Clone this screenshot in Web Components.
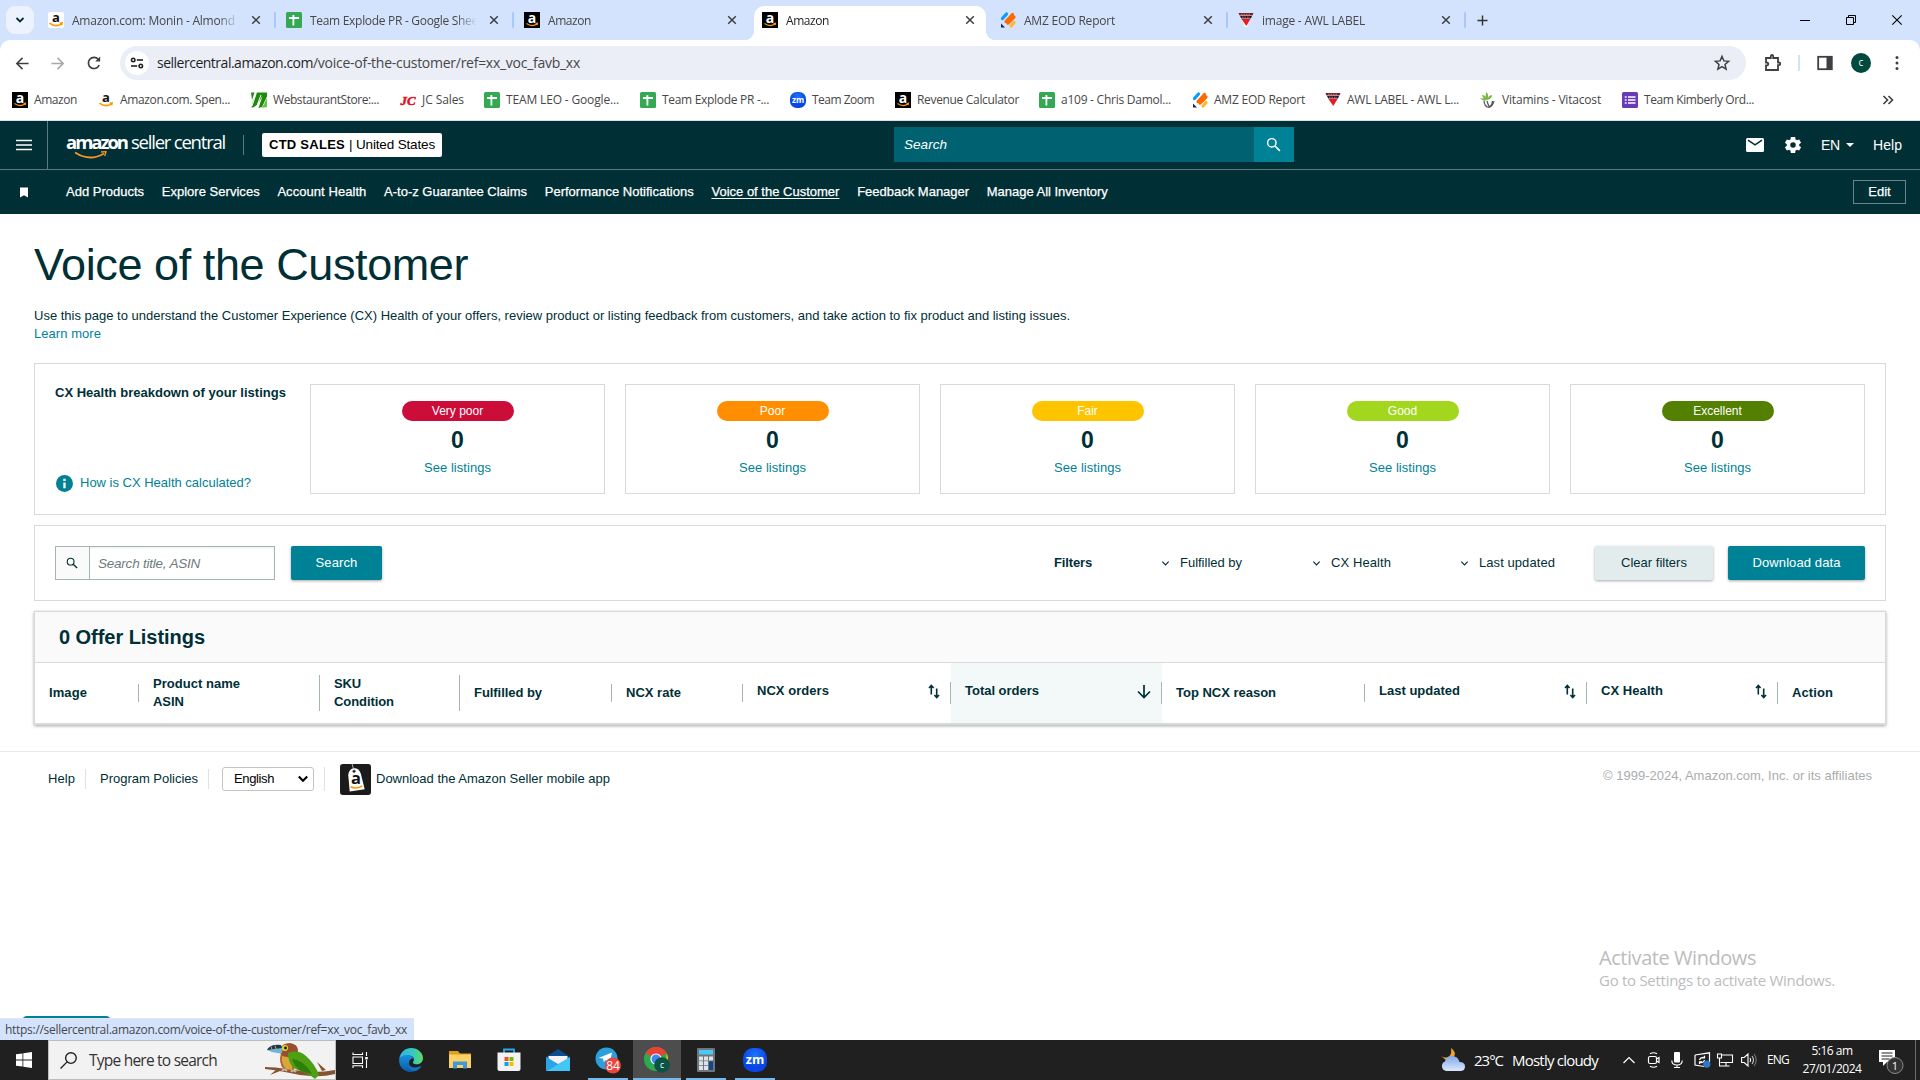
<!DOCTYPE html>
<html lang="en">

<head>
  <meta charset="UTF-8">
  <meta name="viewport" content="width=device-width, initial-scale=1.0">
  <title>Amazon</title>
  <style>
    html, body { height: 100%; }
    body {
      margin: 0;
      width: 1920px;
      height: 1080px;
      overflow: hidden;
      background: #fff;
      color: #002f36;
      font: 13px/18px "Liberation Sans", Arial, sans-serif;
      --teal: #008296;
      --ink: #002f36;
      --line: #d5dbdb;
      --ui: "Open Sans", "Noto Sans", sans-serif;
    }
  </style>
</head>

<body>
  <app-screen></app-screen>

  <script>
    // small helper: element with an open shadow root and a template
    function define(name, render, after) {
      customElements.define(name, class extends HTMLElement {
        connectedCallback() {
          if (this.shadowRoot) return;
          const tpl = document.createElement('template');
          tpl.innerHTML = render(this);
          this.attachShadow({ mode: 'open' }).appendChild(tpl.content.cloneNode(true));
          if (after) after(this);
        }
      });
    }

    const ICONS = {
      amzdark: `<svg viewBox="0 0 16 16"><rect width="16" height="16" fill="#000"/><text x="8" y="10.6" font-size="14" font-weight="700" text-anchor="middle" fill="#fff" font-family="Open Sans,sans-serif">a</text><path d="M2.5 11.6q5.3 3.8 10.5.5M11.5 11.5l2-.3-.4 1.8" fill="none" stroke="#f90" stroke-width="1.2"/></svg>`,
      amz: `<svg viewBox="0 0 16 16"><rect width="16" height="16" rx="2" fill="#fff"/><text x="8" y="10" font-size="13" font-weight="700" text-anchor="middle" fill="#111" font-family="Open Sans,sans-serif">a</text><path d="M1.5 11.2q6 4.5 12 .6M11.6 11.2l2.5-.2-.5 2.2" fill="none" stroke="#f90" stroke-width="1.6"/></svg>`,
      sheet: `<svg viewBox="0 0 16 16"><rect width="16" height="16" rx="1.5" fill="#34a853"/><path d="M3 6h10M7.4 3v10.5" stroke="#fff" stroke-width="1.8"/></svg>`,
      webst: `<svg viewBox="0 0 16 16"><path d="M0 .5h3.5L1 8zM6 .5h10v4L11 15l-3.500 1 4-12L6 13 2 15.500H.5L2 9z" fill="#1e8a0e"/><path d="M1 14L5 2M5.500 15L10 3" stroke="#fff" stroke-width="1"/><path d="M11 16l5-1V6z" fill="#6fbf4a"/></svg>`,
      jc: `<svg viewBox="0 0 16 16"><text x="8" y="12.500" font-size="12.500" font-style="italic" font-weight="700" text-anchor="middle" textLength="15" lengthAdjust="spacingAndGlyphs" fill="#e2121b" stroke="#e2121b" stroke-width=".5" font-family="Liberation Serif,serif">JC</text></svg>`,
      zm: `<svg viewBox="0 0 24 24"><defs><radialGradient id="z" cy=".3"><stop offset="0" stop-color="#1b76ff"/><stop offset="1" stop-color="#0a45e6"/></radialGradient></defs><rect width="24" height="24" rx="10" fill="url(#z)"/><text x="12" y="16" font-size="12.500" font-weight="700" text-anchor="middle" fill="#fff" font-family="Open Sans,sans-serif">zm</text></svg>`,
      amzeod: `<svg viewBox="0 0 16 16" stroke-linecap="round" stroke-width="3.200"><path d="M2.500 6.500L6.500 2" stroke="#0a9bff"/><path d="M6 9.500L12.500 2.500M8 11L14 5" stroke="#ff6a00"/><path d="M11 14L14 10.500" stroke="#ffb72b"/><path d="M1 11.500l4 4H1z" fill="#1d1d5e"/></svg>`,
      awl: `<svg viewBox="0 0 16 16"><path d="M0 1h16L9 15H7z" fill="#fff"/><path d="M.5 1h15l-1 2.500h-13z" fill="#6d1d3a"/><path d="M2 4h12l-1 2.500H3.200z" fill="#1e0f3c"/><path d="M3.500 7h9L8.300 14z" fill="#f01818"/><path d="M3 2.300h9M4 5.200h8" stroke="#e8a33a" stroke-width=".8" stroke-dasharray="1.500 1"/></svg>`,
      vita: `<svg viewBox="0 0 16 16" fill="none"><path d="M7 8Q3 7 2 3 6 3 7 8zM7 8Q4.500 4 6.500 0q3 3 .5 8zM7 8q1-4.500 5-5Q12 7 7 8zM0 6.500q5-1 6.500 2Q3 9 0 6.500z" fill="#7ab648"/><path d="M4 8.500q0 6 5 7Q13 14 14 9M7 9q1 4 2.500 6 3-2 3-6" stroke="#555" stroke-width="1.200"/></svg>`,
      form: `<svg viewBox="0 0 16 16"><rect width="16" height="16" rx="1.500" fill="#673ab7"/><path d="M6 5h7.500M6 8h7.500M6 11h7.500" stroke="#fff" stroke-width="1.700"/><path d="M2.800 5h1.800M2.800 8h1.800M2.800 11h1.800" stroke="#fff" stroke-width="1.700"/></svg>`,
      close: `<svg viewBox="0 0 10 10"><path d="M1.200 1.200l7.600 7.600M8.800 1.200L1.200 8.800" stroke="#3c4043" stroke-width="1.500"/></svg>`,
      plus: `<svg viewBox="0 0 12 12"><path d="M6 .5v11M.5 6h11" stroke="#333" stroke-width="1.600"/></svg>`,
      chevron: `<svg viewBox="0 0 10 10" fill="none"><path d="M1.500 3L5 6.500 8.500 3" stroke="currentColor" stroke-width="1.800"/></svg>`,
      thinchev: `<svg viewBox="0 0 10 10" fill="none"><path d="M1.500 3L5 6.500 8.500 3" stroke="currentColor" stroke-width="1.300"/></svg>`,
      back: `<svg viewBox="0 0 16 16" fill="none" stroke="currentColor" stroke-width="1.700"><path d="M14.500 8H2.500M8 2L2 8l6 6"/></svg>`,
      forward: `<svg viewBox="0 0 16 16" fill="none" stroke="currentColor" stroke-width="1.700"><path d="M1.500 8h12M8 2l6 6-6 6"/></svg>`,
      reload: `<svg viewBox="0 0 16 16" fill="none"><path d="M13.200 10A5.600 5.600 0 1 1 12.300 4.300L13.500 5.500" stroke="#3c4043" stroke-width="1.700"/><path d="M14.200 1.500V6.500H9.200z" fill="#3c4043"/></svg>`,
      tune: `<svg viewBox="0 0 14 14" fill="none" stroke="#202124" stroke-width="1.600"><circle cx="3.200" cy="4" r="1.700"/><path d="M6.800 4H13"/><circle cx="10.800" cy="10" r="1.700"/><path d="M1 10h6.200"/></svg>`,
      star: `<svg viewBox="0 0 16 16" fill="none"><path d="M8 1.500l1.900 4.400 4.700.4-3.600 3.100 1.100 4.700L8 11.600l-4.100 2.500L5 9.400 1.400 6.300l4.700-.4z" stroke="#3c4043" stroke-width="1.500"/></svg>`,
      puzzle: `<svg viewBox="0 0 18 18" fill="none"><path d="M2 4h4.800V2.200a1.200 1.200 0 0 1 2.400 0V4H14v4.500h1a1.300 1.300 0 0 1 0 2.600h-1V16H2v-4.500h.8a1.500 1.500 0 0 0 0-3H2z" stroke="#3c4043" stroke-width="1.800"/></svg>`,
      panel: `<svg viewBox="0 0 16 16"><rect x="1.200" y="1.800" width="13.600" height="12.400" fill="none" stroke="#3c4043" stroke-width="1.800"/><path d="M9.500 2h5v12h-5z" fill="#3c4043"/></svg>`,
      dots: `<svg viewBox="0 0 16 16" fill="#3c4043"><circle cx="8" cy="2.500" r="1.500"/><circle cx="8" cy="8" r="1.500"/><circle cx="8" cy="13.500" r="1.500"/></svg>`,
      more: `<svg viewBox="0 0 12 12" fill="none" stroke="#3c4043" stroke-width="1.600"><path d="M1.500 2l4 4-4 4M6.500 2l4 4-4 4"/></svg>`,
      min: `<svg viewBox="0 0 10 10"><path d="M0 5.500h10" stroke="#000" stroke-width="1"/></svg>`,
      restore: `<svg viewBox="0 0 10 10" fill="none" stroke="#000"><path d="M.5 2.500h7v7h-7zM2.500 2.500v-2h7v7h-2"/></svg>`,
      winclose: `<svg viewBox="0 0 10 10"><path d="M.3.3l9.400 9.400M9.700.3L.3 9.700" stroke="#000" stroke-width="1.100"/></svg>`,
      burger: `<svg viewBox="0 0 16 12"><path d="M0 1.500h16M0 6h16M0 10.500h16" stroke="#fff" stroke-width="1.700"/></svg>`,
      mark: `<svg viewBox="0 0 9 11"><path d="M0 0h9v11L4.500 8.500 0 11z" fill="#fff"/></svg>`,
      search: `<svg viewBox="0 0 16 16" fill="none" stroke="currentColor"><circle cx="6.200" cy="6.200" r="4.500" stroke-width="1.500"/><path d="M9.600 9.600l5.200 5.200" stroke-width="1.800"/></svg>`,
      mail: `<svg viewBox="0 0 18 14"><rect width="18" height="14" rx="1.500" fill="#fff"/><path d="M2 2.200l7 4.600 7-4.600" fill="none" stroke="#002f36" stroke-width="1.600"/></svg>`,
      gear: `<svg viewBox="0 0 24 24"><path fill="#fff" fill-rule="evenodd" d="M19.400 13a7.800 7.800 0 0 0 0-2l2.300-1.700-2.300-4-2.700 1.100a7.500 7.500 0 0 0-1.700-1L14.600 2.500H9.400L9 5.400a7.500 7.500 0 0 0-1.700 1L4.600 5.300l-2.300 4L4.600 11a7.800 7.800 0 0 0 0 2l-2.300 1.700 2.300 4 2.700-1.100c.5.4 1.100.7 1.700 1l.4 2.900h5.200l.4-2.900c.6-.3 1.200-.6 1.700-1l2.700 1.100 2.300-4zM12 15.300a3.300 3.300 0 1 1 0-6.600 3.300 3.300 0 0 1 0 6.600z"/></svg>`,
      caret: `<svg viewBox="0 0 8 4"><path d="M0 0h8L4 4z" fill="#fff"/></svg>`,
      info: `<svg viewBox="0 0 16 16"><circle cx="8" cy="8" r="8" fill="#008296"/><path d="M8 3.500v2.200M8 7v5.500" stroke="#fff" stroke-width="2.200"/></svg>`,
      sort: `<svg viewBox="0 0 12 16" fill="none" stroke="#002f36" stroke-width="1.600"><path d="M3.300 11V2.500M1 4.500L3.300 2l2.300 2.500M8.700 5v8.500M6.400 11.500L8.700 14l2.300-2.500"/></svg>`,
      down: `<svg viewBox="0 0 14 14" fill="none" stroke="#002f36" stroke-width="1.700"><path d="M7 .5v12M1 7l6 6 6-6"/></svg>`,
      app: `<svg viewBox="0 0 32 32"><rect width="32" height="32" rx="3" fill="#1b1b1b"/><path d="M8.500 11q1-6 6-6.500 5-.2 7 5.500l4 16-15.500 2.500z" fill="#fff"/><circle cx="14.500" cy="7.500" r="1.500" fill="#1b1b1b"/><path d="M14.500 7L12.500 0" stroke="#ddd" stroke-width=".8"/><text x="16.500" y="21" font-size="17" font-weight="700" text-anchor="middle" fill="#111" font-family="Open Sans,sans-serif">a</text><path d="M11 23.500q6 3 12-1" fill="none" stroke="#f90" stroke-width="1.500"/></svg>`,
      start: `<svg viewBox="0 0 16 16" fill="#fff"><path d="M0 2.300L6.500 1.400v6.200H0zM7.300 1.300L16 0v7.600H7.300zM0 8.400h6.500v6.200L0 13.700zM7.300 8.400H16V16l-8.700-1.300z"/></svg>`,
      glass: `<svg viewBox="0 0 16 16" fill="none" stroke="#222" stroke-width="1.300"><circle cx="10.300" cy="5.700" r="5"/><path d="M6.700 9.300L.5 15.500"/></svg>`,
      bird: `<svg viewBox="0 0 72 38"><path d="M2 26q10 0 22 2t26 3q12 0 22-2v4q-12 3-24 2Q34 34 22 31q-10-2-20-3z" fill="#85532f"/><path d="M59 30L54 21l9 8zM14 28L7 34l10-4z" fill="#85532f"/><path d="M18 12q-3 10 3 17l10 1 2-14z" fill="#b5622f"/><path d="M19 15q-1 8 4 13l6 1 1-12z" fill="#d9a63a"/><path d="M17 8q2-6 10-6 8 1 8 8 0 4-4 7l-11-2q-4-3-3-7z" fill="#96502d"/><path d="M25 12q10-4 18 3 9 8 13 19l-4 4q-7-6-15-8-12-4-12-18z" fill="#4da012"/><path d="M29 18q12 1 20 15-16-2-20-15z" fill="#2f7d0b"/><path d="M4 9q7 4 15 3l1-5-8-3q-6 1-8 5z" fill="#6fb4d4"/><path d="M4 9q3-6 14-5l1 3z" fill="#26343b"/><path d="M8 5.500l1 3M12 4.500l1 3.500" stroke="#cde" stroke-width=".7"/><circle cx="22" cy="7" r="3" fill="#e3d820"/><circle cx="22.500" cy="7" r="1.400" fill="#111"/><path d="M19 30q2-3 5 0M28 31q2-3 5 0" stroke="#c9b6a5" stroke-width="2" fill="none"/></svg>`,
      taskview: `<svg viewBox="0 0 16 16" fill="none" stroke="#fff" stroke-width="1.100"><path d="M1 5h9.500v6.500H1zM1 .5v2h9.500v-2M1 16v-2.200h9.500V16M14.500 0v4M14.500 8v8"/><path d="M13.200 5h2.600v2.400h-2.600z" fill="#fff" stroke="none"/></svg>`,
      edge: `<svg viewBox="0 0 24 24"><defs><linearGradient id="e1" x1="0" x2="1"><stop offset="0" stop-color="#2fb3e8"/><stop offset=".6" stop-color="#37c9c0"/><stop offset="1" stop-color="#62dd5c"/></linearGradient><linearGradient id="e2" x1="0" y1="0" x2="0" y2="1"><stop offset="0" stop-color="#1a93dd"/><stop offset="1" stop-color="#0c59a4"/></linearGradient></defs><path d="M.3 10.500C1.500 4 6.500 0 12 0c7 0 12 5 12 10 0 4-3 6.300-6.200 6.300-3 0-4.500-1.300-3.600-2.600 1.700-2.700.2-6.200-4.700-6.200C5 7.500 1.500 9 .3 10.500z" fill="url(#e1)"/><path d="M.2 10.600C1.600 8 5 6.600 8.800 7 12 7.400 14 9 14.300 10.500 9 9.500 7.500 20 17.500 22.600 10 26.500-1.200 22 .2 10.600z" fill="url(#e2)"/><path d="M9.500 12.500c-1.500 5 4 9.500 13 5.200-1 2.300-3 4.200-5.500 5.200-6 .5-10.500-6-7.500-10.400z" fill="#1370c2"/></svg>`,
      folder: `<svg viewBox="0 0 22 18"><path d="M0 0h9l2 2.500h11V16H0z" fill="#e09f1b"/><path d="M0 3.500h22V17H0z" fill="#fbd067"/><path d="M4 17.500V10.500h14v7h-4V14H8v3.500z" fill="#3f97dc"/></svg>`,
      store: `<svg viewBox="0 0 24 24"><path d="M7 5V1.500h10V5" fill="none" stroke="#28a8ea" stroke-width="1.800"/><path d="M.5 4.500h23V21a2 2 0 0 1-2 2h-19a2 2 0 0 1-2-2z" fill="#f2f2f2"/><path d="M7.500 9h4v4h-4z" fill="#f25022"/><path d="M12.500 9h4v4h-4z" fill="#7fba00"/><path d="M7.500 14h4v4h-4z" fill="#00a4ef"/><path d="M12.500 14h4v4h-4z" fill="#ffb900"/></svg>`,
      mailapp: `<svg viewBox="0 0 24 22"><path d="M0 8L12 0l12 8v2H0z" fill="#0a4d94"/><path d="M2.500 7h19v8h-19z" fill="#f3f3f3"/><path d="M0 8l12 7.500L0 22z" fill="#1a8fe0"/><path d="M24 8L0 22h24z" fill="#42c6f5"/><path d="M0 8l12 7L0 22z" fill="#2aa3ea"/></svg>`,
      telegram: `<svg viewBox="0 0 26 26"><circle cx="11.500" cy="11.500" r="11" fill="#2ba0dc"/><path d="M3.500 11L17 5.500 14.800 16l-4-3-2 2-.8-3.500z" fill="#fff"/><circle cx="18" cy="18.500" r="8" fill="#e8453c"/><text x="18" y="22.900" font-size="12" text-anchor="middle" fill="#fff" font-family="Open Sans,sans-serif">84</text></svg>`,
      chrome: `<svg viewBox="0 0 26 26"><circle cx="12" cy="12" r="12" fill="#2da94f"/><path d="M12 12L1.600 6A12 12 0 0 1 22.400 6z" fill="#ea4335"/><path d="M12 12h10.400L22.400 6A12 12 0 0 1 12 24z" fill="#fbbc05"/><path d="M12 6.500H22.600Q19 0 12 0z" fill="#ea4335"/><circle cx="12" cy="12" r="5.600" fill="#fff"/><circle cx="12" cy="12" r="4.500" fill="#4285f4"/><circle cx="18" cy="18" r="7.800" fill="#0b5345"/><text x="18" y="20.600" font-size="8.500" text-anchor="middle" fill="#fff" font-family="Open Sans,sans-serif">c</text></svg>`,
      calc: `<svg viewBox="0 0 18 24"><rect width="18" height="24" rx="1" fill="#6e757c"/><path d="M2 2h14v4.500H2z" fill="#4cc8f4"/><path d="M2 8.500h4v4H2zM7 8.500h4v4H7zM12 8.500h4v4h-4zM2 13.300h4v4H2zM7 13.300h4v4H7zM2 18h4v4H2zM7 18h4v4H7z" fill="#dfe3e6"/><path d="M12 13.300h4V22h-4z" fill="#114a8b"/></svg>`,
      weather: `<svg viewBox="0 0 24 24"><defs><linearGradient id="w" x1="0" y1="0" x2="0" y2="1"><stop offset="0" stop-color="#7fa9ea"/><stop offset="1" stop-color="#dbe8fc"/></linearGradient></defs><path d="M10 0q6 4 2.500 10L5 12 0 8q5 3 8.500 0Q11 5 10 0z" fill="#f2a52b"/><path d="M5 23a5 5 0 0 1-1-9.500Q5 8 11 8t7.500 6Q24 14 24 18.500T19 23z" fill="url(#w)"/></svg>`,
      up: `<svg viewBox="0 0 12 8" fill="none"><path d="M.5 7L6 1.500 11.500 7" stroke="#fff" stroke-width="1.200"/></svg>`,
      cam: `<svg viewBox="0 0 14 16" fill="none" stroke="#fff" stroke-width="1.200"><rect x="1.500" y="4.500" width="8" height="7" rx="1.500"/><path d="M9.500 7l2.500-1.500v5L9.500 9M3 1.800Q6.500-.3 10 1.800M3 14.200q3.500 2.100 7 0"/></svg>`,
      mic: `<svg viewBox="0 0 12 16"><rect x="3" y="0" width="6" height="10.500" rx="1" fill="#fff"/><path d="M.8 8.500q0 4.500 5.200 4.500t5.200-4.500M6 13v2.500M3 15.500h6" fill="none" stroke="#fff" stroke-width="1.100"/></svg>`,
      sync: `<svg viewBox="0 0 17 16" fill="none" stroke="#fff" stroke-width="1.200"><path d="M1 3L15.500.8V10M1 3v10l9 1.500"/><path d="M5.500 8q1-3 5-2.500M10.500 3.800V6H8M10.500 8q-.5 3-4.500 2.500M5.500 12V9.800H8"/><circle cx="12.800" cy="12.200" r="3.600" fill="#2f78c8" stroke="none"/></svg>`,
      net: `<svg viewBox="0 0 16 14" fill="none" stroke="#fff" stroke-width="1.100"><path d="M5 2h10.500v7.500H3.500M9 9.500v3.500M5.500 13h7M.5 1h4v4h-4zM2.500 5v8h3"/></svg>`,
      sound: `<svg viewBox="0 0 17 14" fill="none" stroke="#fff" stroke-width="1.100"><path d="M.6 4.500h2.600L7 1v12L3.200 9.500H.6zM9 5q1.300 2 0 4"/><path d="M11 3q3 4 0 8" stroke="#ccc"/><path d="M13 1q4.500 6 0 12" stroke="#777"/></svg>`,
      notif: `<svg viewBox="0 0 24 24"><path d="M0 0h16v12H8l-4 4v-4H0z" fill="#fff"/><path d="M2.500 3h11M2.500 6h11M2.500 9h8" stroke="#202020"/><circle cx="16" cy="15.500" r="8" fill="#333" stroke="#8a8a8a"/><text x="16" y="19.500" font-size="11" text-anchor="middle" fill="#fff" font-family="Open Sans,sans-serif">1</text></svg>`
    };

    define('ui-icon', el => `
      <style>
        :host { display: inline-flex; flex: none; }
        svg { display: block; width: ${el.getAttribute('w') || 16}px; height: ${el.getAttribute('h') || el.getAttribute('w') || 16}px; overflow: visible; }
      </style>${ICONS[el.getAttribute('name')]}`);

    // one line of text spaced out to an exact width
    define('fit-text', el => `
      <style>
        :host { display: inline-block; flex: none; width: ${el.getAttribute('w')}px; white-space: nowrap; }
        span { display: inline-block; text-decoration: inherit; text-underline-offset: 2px; }
      </style><span><slot></slot></span>`, el => fits.push(el));
    const fits = [];
    function fitAll() {
      const jobs = fits.map(el => {
        const span = el.shadowRoot.querySelector('span');
        return [span, (el.getAttribute('w') - span.getBoundingClientRect().width) / el.textContent.length];
      });
      jobs.forEach(([span, ls]) => span.style.letterSpacing = ls + 'px');
    }

    define('browser-tab', el => `
      <style>
        :host { display: flex; width: 238px; height: 34px; box-sizing: border-box; position: relative; align-items: center; padding: 0 0 6px 10px; font: 12px/16px var(--ui); color: #474747; }
        :host([active]) { color: #1f1f1f; background: #fff; border-radius: 10px 10px 0 0; width: 232px; padding-left: 8px; margin: 0 4px 0 2px; }
        :host([active])::before, :host([active])::after { content: ""; position: absolute; bottom: 0; width: 10px; height: 10px; }
        :host([active])::before { left: -10px; background: radial-gradient(circle at 0 0, transparent 10px, #fff 10.500px); }
        :host([active])::after { right: -10px; background: radial-gradient(circle at 100% 0, transparent 10px, #fff 10.500px); }
        .label { flex: none; width: 170px; margin: 1px 9px 0 8px; overflow: hidden; white-space: nowrap; -webkit-mask: linear-gradient(90deg, #000 146px, transparent 167px); }
        i { width: 2px; height: 16px; background: #a8c7fa; margin-left: 13px; border-radius: 1px; }
        :host([nosep]) i { visibility: hidden; }
        :host([active]) i { display: none; }
      </style>
      <ui-icon name="${el.getAttribute('icon')}"></ui-icon>
      <div class="label"><fit-text w="${el.getAttribute('w')}"><slot></slot>${el.getAttribute('label')}</fit-text></div>
      <ui-icon name="close" w="10"></ui-icon><i></i>`);

    define('bookmark-item', el => `
      <style>
        :host { display: flex; align-items: center; gap: 6px; font: 12px/16px var(--ui); color: #474747; }
      </style>
      <ui-icon name="${el.getAttribute('icon')}"></ui-icon><fit-text w="${el.getAttribute('w')}">${el.getAttribute('label')}</fit-text>`);

    const TABS = [
      ['amz', 172, 'Amazon.com: Monin - Almond S', ''],
      ['sheet', 168, 'Team Explode PR - Google Shee', ''],
      ['amzdark', 43, 'Amazon', 'nosep'],
      ['amzdark', 43, 'Amazon', 'active'],
      ['amzeod', 91, 'AMZ EOD Report', ''],
      ['awl', 103, 'image - AWL LABEL', '']
    ];
    // icon, slot width, text width, label
    const BOOKMARKS = [
      ['amzdark', 86, 43, 'Amazon'],
      ['amz', 153, 110, 'Amazon.com. Spen...'],
      ['webst', 149, 106, 'WebstaurantStore:...'],
      ['jc', 84, 42, 'JC Sales'],
      ['sheet', 156, 113, 'TEAM LEO - Google...'],
      ['sheet', 150, 107, 'Team Explode PR -...'],
      ['zm', 105, 62, 'Team Zoom'],
      ['amzdark', 144, 102, 'Revenue Calculator'],
      ['sheet', 153, 110, 'a109 - Chris Damol...'],
      ['amzeod', 133, 91, 'AMZ EOD Report'],
      ['awl', 155, 112, 'AWL LABEL - AWL L...'],
      ['vita', 142, 99, 'Vitamins - Vitacost'],
      ['form', 140, 110, 'Team Kimberly Ord...']
    ];

    define('browser-chrome', () => `
      <style>
        :host { display: block; height: 121px; background: #d3e3fd; flex: none; }
        .strip { display: flex; height: 34px; padding: 6px 0 0 6px; align-items: center; }
        .find { width: 28px; height: 28px; border-radius: 9px; background: #ecf3fe; display: flex; align-items: center; justify-content: center; margin: -6px 4px 0 0; }
        .plus { margin: -6px 0 0 11px; }
        .wins { margin-left: auto; display: flex; gap: 36px; padding-right: 18px; margin-top: -6px; }
        .bars { background: #fff; border-radius: 10px 10px 0 0; height: 80px; border-bottom: 1px solid #dcdfe3; }
        .tools { display: flex; align-items: center; height: 46px; padding-left: 15px; color: #3c4043; }
        .box { display: flex; align-items: center; width: 1626px; height: 34px; border-radius: 17px; background: #ebeef7; box-sizing: border-box; padding: 0 16px 0 5px; margin-left: 18px; font: 14px/20px var(--ui); color: #474747; }
        .tune { width: 24px; height: 24px; border-radius: 12px; background: #fff; display: flex; align-items: center; justify-content: center; margin-right: 8px; }
        b { font-weight: 400; color: #1f1f1f; }
        .sep { width: 2px; height: 16px; background: #d3e3fd; margin: 0 17px 0 16px; }
        .me { width: 20px; height: 20px; border-radius: 10px; background: #00493e; color: #fff; font: 10px/19px var(--ui); text-align: center; margin: 0 18px 0 18px; }
        .marks { display: flex; align-items: center; height: 28px; padding-left: 12px; }
        .marks ui-icon:last-child { margin-left: auto; padding-right: 26px; }
      </style>
      <div class="strip">
        <div class="find"><ui-icon name="chevron" w="10"></ui-icon></div>
        ${TABS.map(t => `<browser-tab icon="${t[0]}" w="${t[1]}" label="${t[2]}" ${t[3]}></browser-tab>`).join('')}
        <ui-icon class="plus" name="plus" w="11"></ui-icon>
        <div class="wins"><ui-icon name="min" w="10"></ui-icon><ui-icon name="restore" w="10"></ui-icon><ui-icon name="winclose" w="10"></ui-icon></div>
      </div>
      <div class="bars">
        <div class="tools">
          <ui-icon name="back" w="15"></ui-icon>
          <ui-icon name="forward" w="15" style="margin-left:20px;color:#a5a8ab"></ui-icon>
          <ui-icon name="reload" w="16" style="margin-left:21px"></ui-icon>
          <div class="box">
            <div class="tune"><ui-icon name="tune" w="14"></ui-icon></div>
            <b><fit-text w="156">sellercentral.amazon.com</fit-text></b><fit-text w="267">/voice-of-the-customer/ref=xx_voc_favb_xx</fit-text>
            <ui-icon name="star" w="16" style="margin-left:auto"></ui-icon>
          </div>
          <ui-icon name="puzzle" w="18" style="margin-left:18px"></ui-icon>
          <div class="sep"></div>
          <ui-icon name="panel" w="16"></ui-icon>
          <div class="me">c</div>
          <ui-icon name="dots" w="16"></ui-icon>
        </div>
        <div class="marks">
          ${BOOKMARKS.map(b => `<bookmark-item style="width:${b[1]}px" icon="${b[0]}" w="${b[2]}" label="${b[3]}"></bookmark-item>`).join('')}
          <ui-icon name="more" w="12"></ui-icon>
        </div>
      </div>`);

    define('seller-header', () => `
      <style>
        :host { display: block; flex: none; height: 93px; background: #002f36; color: #fff; }
        .top { display: flex; height: 48px; align-items: center; border-bottom: 1px solid #5f7a7e; }
        .menu { width: 47px; height: 48px; border-right: 1px solid #5f7a7e; display: flex; align-items: center; justify-content: center; }
        .logo { position: relative; width: 160px; margin-left: 18px; display: flex; gap: 4px; font: 18.500px/20px var(--ui); margin-top: -6px; }
        .logo b { font-weight: 700; }
        .logo svg { position: absolute; left: 8px; top: 19px; }
        .bar { width: 1px; height: 20px; background: #5f7a7e; margin: 0 18px 0 17px; }
        .shop { width: 180px; height: 24px; box-sizing: border-box; background: #fff; border-radius: 2px; color: #000; font: 13.500px/24px "Liberation Sans", sans-serif; display: flex; padding-left: 7px; }
        .shop b { font-size: 13px; }
        .find { display: flex; width: 400px; height: 35px; margin-left: 452px; margin-top: -1px; background: #006170; }
        .find em { flex: 1; padding-left: 10px; font-size: 13.500px; line-height: 35px; }
        .find div { width: 40px; background: #008296; display: flex; align-items: center; justify-content: center; box-sizing: border-box; padding: 0 1px 1px 0; }
        .right { display: flex; margin-left: auto; align-items: center; padding-right: 18px; font-size: 14px; }
        .nav { display: flex; height: 44px; align-items: center; padding: 0 14px 0 20px; }
        .nav a { margin-right: 17.700px; line-height: 15px; padding-bottom: 2px; }
        .nav a fit-text { -webkit-text-stroke: .25px #fff; }
        .nav a.on fit-text { text-decoration: underline; }
        .edit { margin-left: auto; width: 53px; height: 24px; box-sizing: border-box; border: 1px solid #6d8588; line-height: 21px; text-align: center; -webkit-text-stroke: .25px #fff; }
      </style>
      <div class="top">
        <div class="menu"><ui-icon name="burger" w="16" h="12"></ui-icon></div>
        <div class="logo">
          <b><fit-text w="61">amazon</fit-text></b><fit-text w="94">seller central</fit-text>
          <svg width="34" height="9" fill="none" stroke="#f7942a"><path d="M1 1.500Q16 11 30 2.500" stroke-width="1.800"/><path d="M27 1l5-.3-1.300 4.300" stroke-width="1.300"/></svg>
        </div>
        <div class="bar"></div>
        <div class="shop"><b><fit-text w="76">CTD SALES</fit-text></b><span style="margin-left:4px"><fit-text w="86">| United States</fit-text></span></div>
        <div class="find"><em><fit-text w="43">Search</fit-text></em><div><ui-icon name="search" w="15"></ui-icon></div></div>
        <div class="right">
          <ui-icon name="mail" w="18" h="14"></ui-icon>
          <ui-icon name="gear" w="20" style="margin:0 18px 0 19px"></ui-icon>
          <fit-text w="19">EN</fit-text><ui-icon name="caret" w="8" h="4" style="margin:0 19px 0 6px"></ui-icon>
          <fit-text w="29">Help</fit-text>
        </div>
      </div>
      <div class="nav">
        <ui-icon name="mark" w="8" h="11" style="margin-right:38px"></ui-icon>
        ${[[78, 'Add Products'], [98, 'Explore Services'], [89, 'Account Health'], [143, 'A-to-z Guarantee Claims'], [149, 'Performance Notifications'], [128, 'Voice of the Customer'], [112, 'Feedback Manager'], [121, 'Manage All Inventory']]
          .map(([w, t], i) => `<a class="${i == 5 ? 'on' : ''}"><fit-text w="${w}">${t}</fit-text></a>`).join('')}
        <div class="edit">Edit</div>
      </div>`);

    define('health-card', el => `
      <style>
        :host { display: flex; flex-direction: column; align-items: center; box-sizing: border-box; height: 110px; border: 1px solid var(--line); padding-top: 16px; }
        .pill { width: 112px; height: 20px; border-radius: 10px; background: ${el.getAttribute('color')}; color: #fff; font-size: 12px; line-height: 20px; text-align: center; }
        b { font-size: 23px; line-height: 26px; margin-top: 6px; }
        a { color: var(--teal); margin-top: 6px; line-height: 18px; }
      </style>
      <div class="pill"><slot></slot></div><b>0</b><a><fit-text w="67">See listings</fit-text></a>`);

    define('health-panel', () => `
      <style>
        :host { display: grid; grid-template-columns: 235px repeat(5, 295px); column-gap: 20px; box-sizing: border-box; height: 152px; border: 1px solid var(--line); padding: 20px; }
        .side { display: flex; flex-direction: column; justify-content: space-between; height: 110px; }
        .how { display: flex; align-items: center; gap: 7px; color: var(--teal); padding: 0 0 2px 1px; }
      </style>
      <div class="side">
        <b><fit-text w="231">CX Health breakdown of your listings</fit-text></b>
        <div class="how"><ui-icon name="info" w="17"></ui-icon><fit-text w="171">How is CX Health calculated?</fit-text></div>
      </div>
      <health-card color="#cc0c39">Very poor</health-card>
      <health-card color="#ff8f00">Poor</health-card>
      <health-card color="#ffc400">Fair</health-card>
      <health-card color="#a2d71e">Good</health-card>
      <health-card color="#538000">Excellent</health-card>`);

    define('ui-button', () => `
      <style>
        :host { display: flex; align-items: center; justify-content: center; height: 34px; flex: none; border-radius: 2px; background: var(--teal); color: #fff; box-shadow: 0 1px 3px rgba(0, 0, 0, .35); padding-bottom: 1px; box-sizing: border-box; }
        :host([plain]) { background: #e3eced; color: var(--ink); }
      </style><slot></slot>`);

    define('filter-bar', () => `
      <style>
        :host { display: flex; align-items: center; box-sizing: border-box; height: 76px; border: 1px solid var(--line); padding: 0 20px; }
        .box { display: flex; width: 220px; height: 34px; box-sizing: border-box; border: 1px solid #a6b4b6; margin-right: 16px; box-shadow: inset 0 1px 2px rgba(0, 0, 0, .08); }
        .box div { width: 33px; border-right: 1px solid #a6b4b6; background: #fafafa; display: flex; align-items: center; justify-content: center; box-sizing: content-box; }
        .box div ui-icon { margin: 0 1px 1px 0; }
        .box em { padding-left: 8px; font-size: 13.500px; line-height: 33px; color: #6d7b7d; }
        .drop { display: flex; align-items: center; gap: 10px; }
      </style>
      <div class="box"><div><ui-icon name="search" w="12"></ui-icon></div><em><fit-text w="102">Search title, ASIN</fit-text></em></div>
      <ui-button style="width:91px"><fit-text w="42">Search</fit-text></ui-button>
      <b style="margin:0 69px 0 auto"><fit-text w="38">Filters</fit-text></b>
      <div class="drop" style="margin-right:70px"><ui-icon name="thinchev" w="9"></ui-icon><fit-text w="62">Fulfilled by</fit-text></div>
      <div class="drop" style="margin-right:69px"><ui-icon name="thinchev" w="9"></ui-icon><fit-text w="60">CX Health</fit-text></div>
      <div class="drop" style="margin-right:40px"><ui-icon name="thinchev" w="9"></ui-icon><fit-text w="76">Last updated</fit-text></div>
      <ui-button plain style="width:118px;margin-right:15px"><fit-text w="66">Clear filters</fit-text></ui-button>
      <ui-button style="width:137px"><fit-text w="88">Download data</fit-text></ui-button>`);

    define('table-head', el => `
      <style>
        :host { display: flex; align-items: center; justify-content: space-between; box-sizing: border-box; height: 60px; padding-left: 14px; font-weight: 700; }
        :host([on]) { background: #f3f8f9; }
        .text { padding-bottom: ${el.hasAttribute('icon') ? 5 : 0}px; }
        .end { display: flex; align-items: center; gap: 10px; }
        .end ui-icon { padding-bottom: 3px; }
        i { width: 1px; height: ${el.getAttribute('bar')}px; background: #a6b4b6; }
      </style>
      <div class="text"><slot></slot></div>
      <div class="end">${el.hasAttribute('icon') ? `<ui-icon name="${el.getAttribute('icon')}" w="${el.hasAttribute('on') ? 14 : 12}" h="${el.hasAttribute('on') ? 15 : 17}"></ui-icon>` : ''}${el.hasAttribute('bar') ? '<i></i>' : ''}</div>`);

    define('offer-table', () => `
      <style>
        :host { display: block; box-sizing: border-box; height: 114px; border: 1px solid var(--line); border-bottom-width: 2px; box-shadow: 0 1px 3px rgba(0, 0, 0, .35); }
        h2 { margin: 0; height: 50px; background: #fafafa; border-bottom: 1px solid var(--line); font-size: 20px; line-height: 50px; padding-left: 24px; }
        .row { display: grid; grid-template-columns: 104px 181px 140px 152px 131px 208px 211px 203px 222px 191px 1fr; }
      </style>
      <h2><fit-text w="146">0 Offer Listings</fit-text></h2>
      <div class="row">
        <table-head bar="18"><fit-text w="38">Image</fit-text></table-head>
        <table-head bar="36"><fit-text w="87">Product name</fit-text><br><fit-text w="31">ASIN</fit-text></table-head>
        <table-head bar="36"><fit-text w="27">SKU</fit-text><br><fit-text w="60">Condition</fit-text></table-head>
        <table-head bar="18"><fit-text w="68">Fulfilled by</fit-text></table-head>
        <table-head bar="18"><fit-text w="55">NCX rate</fit-text></table-head>
        <table-head bar="22" icon="sort"><fit-text w="72">NCX orders</fit-text></table-head>
        <table-head bar="22" icon="down" on><fit-text w="74">Total orders</fit-text></table-head>
        <table-head bar="18"><fit-text w="100">Top NCX reason</fit-text></table-head>
        <table-head bar="22" icon="sort"><fit-text w="81">Last updated</fit-text></table-head>
        <table-head bar="22" icon="sort"><fit-text w="62">CX Health</fit-text></table-head>
        <table-head><fit-text w="41">Action</fit-text></table-head>
      </div>`);

    define('page-footer', () => `
      <style>
        :host { display: flex; align-items: center; border-top: 1px solid #e7e9e9; margin-top: 26px; height: 54px; padding: 0 48px; }
        i { width: 1px; height: 20px; background: #e0e3e3; }
        .lang { width: 92px; height: 24px; box-sizing: border-box; border: 1px solid #bfc6c6; border-radius: 3px; display: flex; align-items: center; padding: 0 4px 0 11px; justify-content: space-between; color: #000; margin: 0 10px 0 13px; }
        .copy { margin-left: auto; color: #a9adad; padding-bottom: 7px; }
      </style>
      <fit-text w="27">Help</fit-text><i style="margin:0 14px 0 10px"></i>
      <fit-text w="98">Program Policies</fit-text><i style="margin-left:10px"></i>
      <div class="lang"><fit-text w="40">English</fit-text><ui-icon name="chevron" w="12"></ui-icon></div><i style="height:24px"></i>
      <ui-icon name="app" w="31" style="margin:1px 5px 0 15px"></ui-icon>
      <fit-text w="234">Download the Amazon Seller mobile app</fit-text>
      <div class="copy"><fit-text w="269">© 1999-2024, Amazon.com, Inc. or its affiliates</fit-text></div>`);

    define('voice-page', () => `
      <style>
        :host { display: block; flex: 1; position: relative; overflow: hidden; }
        .body { padding: 0 34px; }
        h1 { margin: 0; padding-top: 23px; font-weight: 400; font-size: 45px; line-height: 56px; }
        p { margin: 14px 0 0; }
        a { color: var(--teal); display: block; }
        health-panel { margin-top: 20px; }
        filter-bar, offer-table { margin-top: 10px; }
        .mark { position: absolute; left: 1599px; top: 730px; font: 20px/28px var(--ui); color: #bcbcbc; }
        .mark small { display: block; font-size: 15px; line-height: 18px; margin-top: -1px; }
        .help { position: absolute; left: 22px; top: 802px; width: 89px; height: 30px; border-radius: 5px; background: var(--teal); }
        .status { position: absolute; left: 0; bottom: 0; width: 414px; height: 22px; padding-left: 5px; box-sizing: border-box; background: #d3e3fd; border-top: 1px solid #e3e6ea; font: 12px/21px var(--ui); color: #474747; }
      </style>
      <div class="body">
        <h1><fit-text w="434">Voice of the Customer</fit-text></h1>
        <p><fit-text w="1036">Use this page to understand the Customer Experience (CX) Health of your offers, review product or listing feedback from customers, and take action to fix product and listing issues.</fit-text><a><fit-text w="67">Learn more</fit-text></a></p>
        <health-panel></health-panel>
        <filter-bar></filter-bar>
        <offer-table></offer-table>
      </div>
      <page-footer></page-footer>
      <div class="mark"><fit-text w="157">Activate Windows</fit-text><small><fit-text w="236">Go to Settings to activate Windows.</fit-text></small></div>
      <div class="help"></div>
      <div class="status"><fit-text w="402">https://sellercentral.amazon.com/voice-of-the-customer/ref=xx_voc_favb_xx</fit-text></div>`);

    define('task-button', el => `
      <style>
        :host { display: flex; align-items: center; justify-content: center; width: 48px; height: 40px; box-sizing: border-box; margin-right: 1px; position: relative; }
        :host([active]) { background: #4d4d4d; }
        :host([open])::after { content: ""; position: absolute; bottom: 0; left: 4px; right: 4px; height: 2px; background: #76b9ed; }
        :host([active])::after { left: 0; right: 0; }
      </style><ui-icon name="${el.getAttribute('icon')}" w="${el.getAttribute('w')}" h="${el.getAttribute('h') || el.getAttribute('w')}"></ui-icon>`);

    define('task-bar', () => `
      <style>
        :host { display: flex; flex: none; height: 40px; background: #202020; color: #fff; align-items: center; font: 15px/20px var(--ui); }
        .start { width: 48px; display: flex; justify-content: center; }
        .find { display: flex; align-items: center; width: 288px; height: 40px; box-sizing: border-box; background: #f2f2f2; border: 1px solid #bdbdbd; padding-left: 11px; color: #333; font-size: 15.500px; }
        .find fit-text { margin: 0 auto 0 12px; }
        .tray { display: flex; align-items: center; margin-left: auto; }
        .tray > * { margin-left: 9px; }
        .clock { font-size: 12px; line-height: 18px; width: 60px; text-align: center; }
        .desk { width: 1px; height: 40px; background: #6d6d6d; margin: 0 4px 0 12px; }
      </style>
      <div class="start"><ui-icon name="start" w="16"></ui-icon></div>
      <div class="find"><ui-icon name="glass" w="17"></ui-icon><fit-text w="128">Type here to search</fit-text><ui-icon name="bird" w="72" h="38"></ui-icon></div>
      <task-button icon="taskview" w="16"></task-button>
      <task-button icon="edge" w="24" style="margin-left:2px"></task-button>
      <task-button icon="folder" w="22" h="18"></task-button>
      <task-button icon="store" w="24"></task-button>
      <task-button icon="mailapp" w="24" h="22"></task-button>
      <task-button icon="telegram" w="26" open style="margin-left:1px"></task-button>
      <task-button icon="chrome" w="26" open active></task-button>
      <task-button icon="calc" w="18" h="24" open></task-button>
      <task-button icon="zm" w="24" open></task-button>
      <div class="tray">
        <ui-icon name="weather" w="24"></ui-icon>
        <fit-text w="29">23°C</fit-text>
        <fit-text w="86">Mostly cloudy</fit-text>
        <ui-icon name="up" w="12" h="8" style="margin-left:25px"></ui-icon>
        <ui-icon name="cam" w="14" h="16" style="margin-left:12px"></ui-icon>
        <ui-icon name="mic" w="12" h="16" style="margin-left:10px"></ui-icon>
        <ui-icon name="sync" w="17" h="16" style="margin-left:11px"></ui-icon>
        <ui-icon name="net" w="16" h="14" style="margin-left:6px"></ui-icon>
        <ui-icon name="sound" w="17" h="14" style="margin-left:8px"></ui-icon>
        <fit-text w="22" style="font-size:12px;margin-left:9px">ENG</fit-text>
        <div class="clock" style="margin-left:13px"><fit-text w="41">5:16 am</fit-text><br><fit-text w="59">27/01/2024</fit-text></div>
        <ui-icon name="notif" w="24" style="margin:4px 0 0 17px"></ui-icon>
        <div class="desk"></div>
      </div>`);

    define('app-screen', () => `
      <style>:host { display: flex; flex-direction: column; width: 1920px; height: 1080px; }</style>
      <browser-chrome></browser-chrome>
      <seller-header></seller-header>
      <voice-page></voice-page>
      <task-bar></task-bar>`);

    fitAll();
  </script>
</body>

</html>
